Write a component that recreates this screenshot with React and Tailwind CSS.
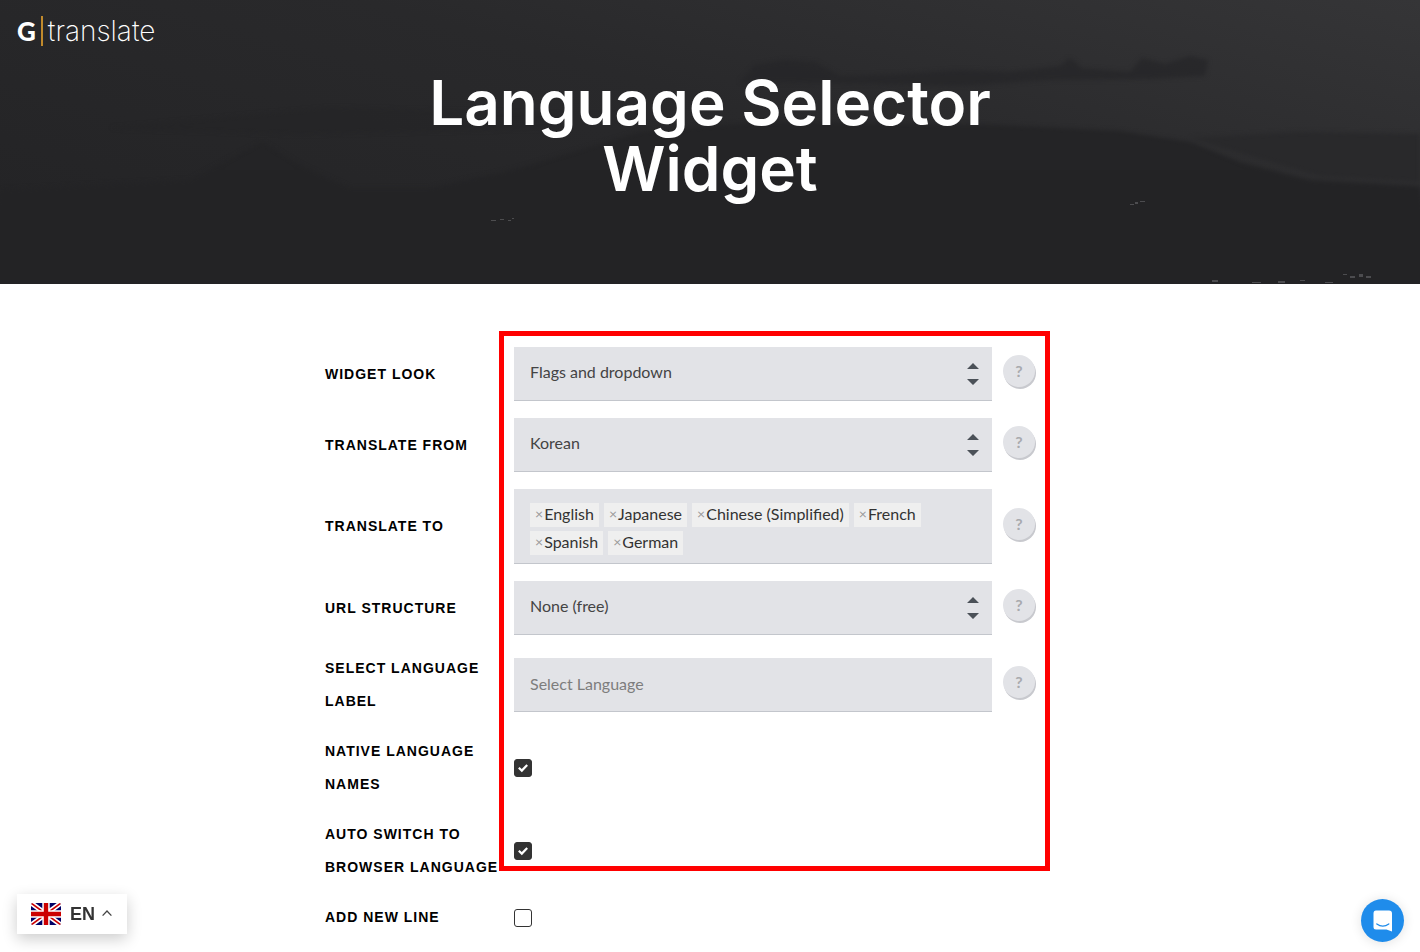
import React from 'react';

const languages = ['English', 'Japanese', 'Chinese (Simplified)', 'French', 'Spanish', 'German'];

const Logo = () => (
  <a href="#" className="inline-flex items-center text-white">
    <span className="text-[26px] leading-[30px] font-black">G</span>
    <span className="mx-[5px] h-[30px] w-[2px] bg-[#c18a2c]"></span>
    <span className="font-['Inter'] text-[28px] leading-[30px] font-extralight">translate</span>
  </a>
);

const HeroBackdrop = () => (
  <svg
    className="absolute inset-0 h-full w-full"
    viewBox="0 0 1420 284"
    preserveAspectRatio="none"
    aria-hidden="true"
  >
    <defs>
      <linearGradient id="sky" x1="0" y1="0.7" x2="1" y2="0">
        <stop offset="0" stopColor="#242426" />
        <stop offset="0.5" stopColor="#29292b" />
        <stop offset="1" stopColor="#353537" />
      </linearGradient>
      <linearGradient id="ridge" x1="0" y1="0" x2="0" y2="1">
        <stop offset="0" stopColor="#242426" />
        <stop offset="1" stopColor="#232325" />
      </linearGradient>
      <filter id="haze" x="-10%" y="-20%" width="120%" height="140%" colorInterpolationFilters="sRGB">
        <feGaussianBlur stdDeviation="2" />
      </filter>
    </defs>
    <rect width="1420" height="284" fill="url(#sky)" />
    <g filter="url(#haze)">
      <path d="M740 82 L755 65 L785 60 L815 62 L840 76 L900 74 L960 70 L1010 72 L1060 66 L1070 58 L1082 68 L1130 72 L1142 58 L1165 64 L1190 56 L1208 60 L1205 76 L1150 79 L1050 80 L960 86 L880 84 Z" fill="#262628" opacity="0.75" />
      <path d="M110 128 L330 108 L560 114 L560 128 L300 134 Z" fill="#242426" opacity="0.5" />
      <path d="M1190 138 L1300 132 L1420 134 L1420 182 L1320 176 Z" fill="#29292b" />
      <path d="M0 190 L190 180 L262 142 L300 165 L350 188 L430 188 L520 168 L640 132 L760 122 L1000 125 L1120 131 L1190 142 L1240 162 L1310 180 L1420 186 L1440 300 L-20 300 Z" fill="url(#ridge)" />
    </g>
    <g fill="#77777a" opacity="0.5">
      <path d="M491 220h5v1h-5zM500 219h4v1h-4zM508 220h3v1h-3zM512 218h2v1h-2z" />
      <path d="M1130 204h4v1h-4zM1135 202h3v2h-3zM1140 201h5v1h-5z" />
      <path d="M1212 280h6v2h-6zM1252 282h9v1h-9zM1278 281h7v2h-7zM1300 280h5v1h-5z" />
      <path d="M1343 274h4v1h-4zM1350 276h5v2h-5zM1359 274h4v3h-4zM1366 276h5v2h-5zM1325 282h8v1h-8z" />
    </g>
  </svg>
);

const HelpButton = ({ topic }) => (
  <button
    type="button"
    aria-label={`Help: ${topic}`}
    className="mb-1.5 ml-[11px] h-8 w-8 shrink-0 rounded-full bg-[#e2e3e7] text-center text-base leading-8 font-bold text-[#a9aaae] shadow-[1px_2px_0_#c8c9ce]"
  >
    ?
  </button>
);

const Row = ({ id, label, help, children }) => (
  <div className="flex items-center">
    <label
      htmlFor={id}
      className="w-[189px] shrink-0 pr-2 font-['Liberation_Sans',sans-serif] text-sm leading-[33px] font-bold tracking-[1px] text-black uppercase"
    >
      {label}
    </label>
    {children}
    {help && <HelpButton topic={label} />}
  </div>
);

const SelectField = ({ id, value }) => (
  <div className="relative w-[478px] min-w-0">
    <select
      id={id}
      defaultValue={value}
      className="block h-[54px] w-full appearance-none rounded-none border-b border-[#c3c6cc] bg-[#e2e3e7] px-4 pb-[3px] text-base text-[#444]"
    >
      <option>{value}</option>
    </select>
    <svg
      className="pointer-events-none absolute top-4 right-[13px] h-[22px] w-3"
      viewBox="0 0 12 22"
      fill="#4b5158"
      aria-hidden="true"
    >
      <path d="M0 6 L6 0 L12 6Z M0 16 L6 22 L12 16Z" />
    </svg>
  </div>
);

const LanguageTags = ({ id }) => (
  <ul className="flex min-h-[75px] w-[478px] min-w-0 flex-wrap content-start gap-x-[5px] gap-y-1 border-b border-[#c3c6cc] bg-[#e2e3e7] px-4 pt-[14px] pb-2">
    {languages.map((name) => (
      <li key={name} className="flex h-6 items-center bg-[#efefef] px-[5px] pb-[3px] text-base leading-5 text-[#333]">
        <button type="button" aria-label={`Remove ${name}`} className="mr-px text-sm text-[#999]">
          ×
        </button>
        {name}
      </li>
    ))}
    <li>
      <input id={id} type="text" className="h-6 w-3 bg-transparent outline-none" />
    </li>
  </ul>
);

const Checkbox = ({ id, checked }) => (
  <span className="grid h-[18px] w-[18px] place-items-center">
    <input
      id={id}
      type="checkbox"
      defaultChecked={checked}
      className="peer col-start-1 row-start-1 h-[18px] w-[18px] appearance-none rounded-[3px] border border-[#333] bg-white checked:bg-[#333]"
    />
    <svg
      className="pointer-events-none invisible col-start-1 row-start-1 h-[10px] w-[10px] peer-checked:visible"
      viewBox="0 0 10 10"
      fill="none"
      stroke="#fff"
      strokeWidth="2.2"
      aria-hidden="true"
    >
      <path d="M0.8 4.8 L3.8 7.6 L9.2 2" />
    </svg>
  </span>
);

const UnionJack = () => (
  <svg className="h-[22px] w-[30px] rounded-[2px]" viewBox="0 0 30 22" aria-hidden="true">
    <rect width="30" height="22" fill="#006" />
    <path d="M0 0 L30 22 M30 0 L0 22" stroke="#fff" strokeWidth="5" />
    <path d="M0 0 L15 11 M30 22 L15 11" stroke="#c00" strokeWidth="1.6" />
    <path d="M30 0 L15 11 M0 22 L15 11" stroke="#c00" strokeWidth="1.6" />
    <path d="M15 0 V22 M0 11 H30" stroke="#fff" strokeWidth="7.4" />
    <path d="M15 0 V22 M0 11 H30" stroke="#c00" strokeWidth="4.4" />
  </svg>
);

const LanguageSwitcher = () => (
  <button
    type="button"
    className="fixed bottom-[18px] left-[17px] flex h-10 w-[110px] items-center bg-white pl-[14px] font-['Liberation_Sans',sans-serif] text-lg font-bold text-[#333] shadow-[0_5px_15px_rgba(0,0,0,0.2)]"
  >
    <UnionJack />
    <span className="ml-[9px]">EN</span>
    <svg className="ml-[7px] h-[10px] w-[10px]" viewBox="0 0 10 10" fill="none" stroke="#444" strokeWidth="1.3" aria-hidden="true">
      <path d="M0.6 6.6 L5 2 L9.4 6.6" />
    </svg>
  </button>
);

const ChatLauncher = () => (
  <button
    type="button"
    aria-label="Open chat"
    className="fixed right-4 bottom-[10px] flex h-[43px] w-[43px] items-center justify-center rounded-full bg-[#1f8ceb] shadow-[0_1px_12px_rgba(0,0,0,0.12)]"
  >
    <svg className="h-[22px] w-5" viewBox="0 0 20 22" aria-hidden="true">
      <path d="M3 0.5 H16 Q19 0.5 19 3.5 V21.5 L13.5 19.5 H3 Q0.5 19.5 0.5 17 V3.5 Q0.5 0.5 3 0.5Z" fill="#fff" />
      <path d="M3.8 14 Q9.8 18.4 15.8 14" fill="none" stroke="#1f8ceb" strokeWidth="1.3" strokeLinecap="round" />
    </svg>
  </button>
);

const App = () => {
  return (
    <div className="min-h-screen bg-white font-['Lato',sans-serif]">
      <header className="relative overflow-hidden bg-[#232325] pb-[82px]">
        <HeroBackdrop />
        <div className="relative flex px-[17px] pt-4">
          <Logo />
        </div>
        <h1 className="relative mx-auto mt-6 max-w-[770px] px-20 text-center font-['Inter',sans-serif] text-[62px] leading-[66px] font-semibold text-white">
          Language Selector Widget
        </h1>
      </header>

      <main className="px-4 pt-[63px] pb-[18px]">
        <form className="relative mx-auto flex max-w-[770px] flex-col gap-[17px]">
          <Row id="look" label="Widget look" help>
            <SelectField id="look" value="Flags and dropdown" />
          </Row>
          <Row id="from" label="Translate from" help>
            <SelectField id="from" value="Korean" />
          </Row>
          <Row id="to" label="Translate to" help>
            <LanguageTags id="to" />
          </Row>
          <Row id="url" label="URL structure" help>
            <SelectField id="url" value="None (free)" />
          </Row>
          <Row id="label" label="Select language label" help>
            <input
              id="label"
              type="text"
              placeholder="Select Language"
              className="h-[54px] w-[478px] min-w-0 border-b border-[#c3c6cc] bg-[#e2e3e7] px-4 pb-[3px] text-base text-[#444] placeholder:text-[#7d7d7d]"
            />
          </Row>
          <Row id="native" label="Native language names">
            <Checkbox id="native" checked />
          </Row>
          <Row id="auto" label="Auto switch to browser language">
            <Checkbox id="auto" checked />
          </Row>
          <Row id="newline" label="Add new line">
            <Checkbox id="newline" />
          </Row>

          {/* Highlight frame round the settings */}
          <div className="pointer-events-none absolute -top-4 right-[45px] left-[174px] h-[540px] border-[5px] border-[#f00]"></div>
        </form>
      </main>

      <LanguageSwitcher />
      <ChatLauncher />
    </div>
  );
};

export default App;
